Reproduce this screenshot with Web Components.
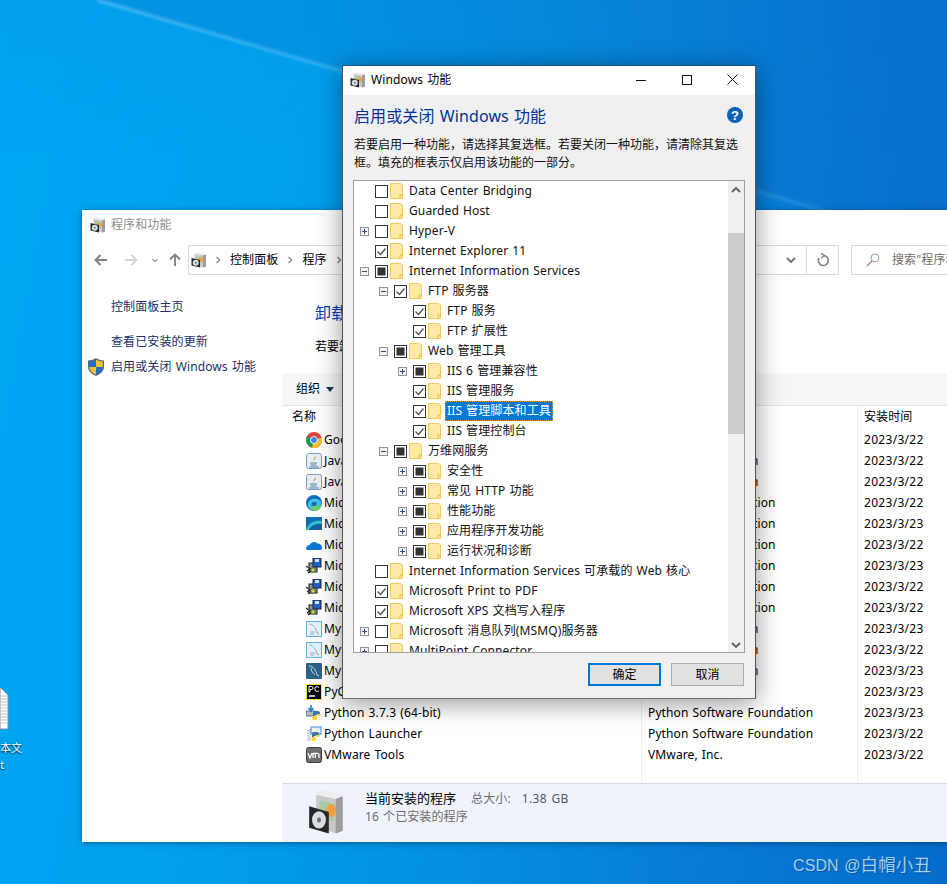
<!DOCTYPE html>
<html lang="zh-CN">
<head>
<meta charset="utf-8">
<title>Windows 功能</title>
<style>
	html, body { margin: 0; padding: 0; }
	body { font: 12px/18px "Noto Sans", "Noto Sans CJK SC", sans-serif; color: #000; letter-spacing: .12px; word-spacing: .8px; }
</style>
</head>
<body>
<win-desktop>
	<desktop-file></desktop-file>
	<programs-window>
		<program-row icon="chrome" pub="Google LLC" date="2023/3/22">Google Chrome</program-row>
		<program-row icon="java" pub="Oracle Corporation" date="2023/3/22">Java 8 Update 361 (64-bit)</program-row>
		<program-row icon="java" pub="Oracle Corporation" date="2023/3/22">Java SE Development Kit 8</program-row>
		<program-row icon="edge" pub="Microsoft Corporation" date="2023/3/22">Microsoft Edge</program-row>
		<program-row icon="flag" pub="Microsoft Corporation" date="2023/3/23">Microsoft Edge WebView2</program-row>
		<program-row icon="cloud" pub="Microsoft Corporation" date="2023/3/22">Microsoft OneDrive</program-row>
		<program-row icon="setup" pub="Microsoft Corporation" date="2023/3/23">Microsoft Visual C++ 2015</program-row>
		<program-row icon="setup" pub="Microsoft Corporation" date="2023/3/22">Microsoft Visual C++ 2019</program-row>
		<program-row icon="setup" pub="Microsoft Corporation" date="2023/3/22">Microsoft Visual C++ 2022</program-row>
		<program-row icon="mysql" pub="Oracle Corporation" date="2023/3/23">MySQL Connector</program-row>
		<program-row icon="mysql" pub="Oracle Corporation" date="2023/3/22">MySQL Installer</program-row>
		<program-row icon="mysqldark" pub="Oracle Corporation" date="2023/3/23">MySQL Server 8.0</program-row>
		<program-row icon="pycharm" pub="JetBrains s.r.o." date="2023/3/23">PyCharm Community Edition</program-row>
		<program-row icon="python" pub="Python Software Foundation" date="2023/3/23">Python 3.7.3 (64-bit)</program-row>
		<program-row icon="pylaunch" pub="Python Software Foundation" date="2023/3/22">Python Launcher</program-row>
		<program-row icon="vmware" pub="VMware, Inc." date="2023/3/22">VMware Tools</program-row>
	</programs-window>
	<features-dialog>
		<feature-row state="off">Data Center Bridging</feature-row>
		<feature-row state="off">Guarded Host</feature-row>
		<feature-row state="off" exp="plus">Hyper-V</feature-row>
		<feature-row state="on">Internet Explorer 11</feature-row>
		<feature-row state="part" exp="minus">Internet Information Services</feature-row>
		<feature-row level="1" state="on" exp="minus">FTP 服务器</feature-row>
		<feature-row level="2" state="on">FTP 服务</feature-row>
		<feature-row level="2" state="on">FTP 扩展性</feature-row>
		<feature-row level="1" state="part" exp="minus">Web 管理工具</feature-row>
		<feature-row level="2" state="part" exp="plus">IIS 6 管理兼容性</feature-row>
		<feature-row level="2" state="on">IIS 管理服务</feature-row>
		<feature-row level="2" state="on" selected>IIS 管理脚本和工具</feature-row>
		<feature-row level="2" state="on">IIS 管理控制台</feature-row>
		<feature-row level="1" state="part" exp="minus">万维网服务</feature-row>
		<feature-row level="2" state="part" exp="plus">安全性</feature-row>
		<feature-row level="2" state="part" exp="plus">常见 HTTP 功能</feature-row>
		<feature-row level="2" state="part" exp="plus">性能功能</feature-row>
		<feature-row level="2" state="part" exp="plus">应用程序开发功能</feature-row>
		<feature-row level="2" state="part" exp="plus">运行状况和诊断</feature-row>
		<feature-row state="off">Internet Information Services 可承载的 Web 核心</feature-row>
		<feature-row state="on">Microsoft Print to PDF</feature-row>
		<feature-row state="on">Microsoft XPS 文档写入程序</feature-row>
		<feature-row state="off" exp="plus">Microsoft 消息队列(MSMQ)服务器</feature-row>
		<feature-row state="off" exp="plus">MultiPoint Connector</feature-row>
	</features-dialog>
</win-desktop>

<script>
const BOX_ICON = `
	<svg viewBox="0 0 32 32" width="100%" height="100%" preserveAspectRatio="none">
		<path d="M7 4 L14 1 L30 5 V29 L24 31 L7 26 Z" fill="#c9c9c9"/>
		<path d="M7 4 L14 1 L30 5 L24 7 Z" fill="#efefef"/>
		<path d="M24 7 V31 L30 29 V5 Z" fill="#9d9d9d"/>
		<path d="M10 8 L22 10 V22 L10 20 Z" fill="#a9c9a0"/>
		<circle cx="20" cy="15" r="4.5" fill="#f0a040"/>
		<path d="M1 12 L18 16 V31 L1 27 Z" fill="#26282a"/>
		<circle cx="9.5" cy="21.5" r="6" fill="#d8dde0"/>
		<circle cx="9.5" cy="21.5" r="1.8" fill="#6f7478"/>
	</svg>`;

const APP_ICONS = {
	chrome: `<circle cx="8" cy="8" r="8" fill="#db4437"/>
		<path d="M8 8 L1 4.5 A8 8 0 0 0 6 15.8 Z" fill="#0f9d58"/>
		<path d="M8 8 L15.6 5.5 A8 8 0 0 1 6 15.8 Z" fill="#fbc02d"/>
		<circle cx="8" cy="8" r="3.8" fill="#fff"/><circle cx="8" cy="8" r="3" fill="#4285f4"/>`,
	java: `<rect x=".5" y=".5" width="15" height="15" rx="2" fill="#e6eef7" stroke="#7d9dbd"/>
		<path d="M9 2 C11 4 6 6 8 8.5 C7 6 11.500 5.500 9 2 Z" fill="#e76f00"/>
		<path d="M4 10 H11 M4.500 12 H10.500" stroke="#5382a1" stroke-width="1.200"/>
		<path d="M3 14 H13" stroke="#5382a1"/>`,
	edge: `<circle cx="8" cy="8" r="8" fill="#0c6fc0"/>
		<path d="M2 9 C3 3 12 2 15 7 C16 10 12 11 9.500 10.500 C12 9 10 6 7 7 C4 8 5 13 10 15.500 C5 16.500 1.500 13 2 9 Z" fill="#45c4e8"/>
		<path d="M9.500 10.500 C12 11 15 10.500 16 8 C16 12 13 16 9 16 C6 15 5 12 6 10 C6.500 12 8 11 9.500 10.500 Z" fill="#6fd06a"/>`,
	flag: `<rect y="1" width="16" height="13" fill="#0d6fb8"/>
		<path d="M0 14 C3 6 9 4 16 5 V8 C10 7 5 9 3 14 Z" fill="#35c1c9"/>
		<path d="M3 14 C5 10 10 8 16 9 V14 Z" fill="#1a5fa0"/>`,
	cloud: `<path d="M0 12 C0 9.500 2 8 3.500 8 C5 5 9 4 11 6.500 C14 6 16 8.500 16 11 C16 12 15.500 13 14 13 H2 C1 13 0 12.500 0 12 Z" fill="#0f78d4"/>`,
	setup: `<rect x="3" y="5" width="8" height="9" fill="#8a8f94" stroke="#222"/>
		<rect x="7" y="0" width="8" height="9" fill="#1d62c9" stroke="#223"/>
		<rect x="9" y="1" width="4" height="3" fill="#cfe3ff"/>
		<path d="M0 8 L3 10 M1 13 L5 10 M2 15 L6 12" stroke="#222" stroke-width="1.200"/>
		<circle cx="7" cy="12" r="2.200" fill="#d9d36a" stroke="#3b7a3b"/>`,
	mysql: `<rect x=".5" y=".5" width="15" height="15" fill="#e3f2fa" stroke="#5fb4de"/>
		<path d="M3 3 C7 3 10 7 11 12 L13 13 M4 11 H9 M4 13 H8" stroke="#8fb0c4" fill="none"/>`,
	mysqldark: `<rect width="16" height="16" rx="1" fill="#2d6287"/>
		<path d="M3 3 C7 3 10 7 11 12 L13 13 M5 5 C5 8 7 10 9 12" stroke="#c9d9e4" fill="none"/>`,
	pycharm: `<rect x=".5" y=".5" width="15" height="15" fill="#000" stroke="#f5e625"/>
		<path d="M3 2.500 H5.500 Q7 2.500 7 4 Q7 5.500 5.500 5.500 H4 V8 H3 Z M13 3.500 Q11 2 9.500 3 Q8 4.500 9.500 7 Q11 8 13 7" stroke="#fff" fill="none"/>
		<path d="M3 12 H9" stroke="#fff" stroke-width="1.500"/>`,
	python: `<rect x="0" y="6" width="9" height="5" fill="#a9b8c4" stroke="#5d7186"/>
		<path d="M5 0 V5 M2.500 3 L5 6 L7.500 3" stroke="#1b7fd4" stroke-width="1.500" fill="none"/>
		<path d="M8 6 H12 Q14 6 14 8 V10 H9 V12 H7 V8 Q7 6 8 6 Z" fill="#3c77a9"/>
		<path d="M15 9 H11 V13 Q11 16 8 15.500 Q6 15 6 13 V11 H12 Q15 11 15 9 Z" fill="#ffd43b"/>`,
	pylaunch: `<rect x="5" y="1" width="10" height="7" fill="#e8f1f9" stroke="#3d89d0"/>
		<path d="M2 4 L2 15 M4 3 L4 15" stroke="#7a8c9c" stroke-dasharray="1.500 1"/>
		<path d="M7 6 H11 Q13 6 13 8 V10 H8 V12 H6 V8 Q6 6 7 6 Z" fill="#3c77a9"/>
		<path d="M14 9 H10 V13 Q10 15.500 8 15.500 Q5.500 15 5.500 13 V11 H11 Q14 11 14 9 Z" fill="#ffd43b"/>`,
	vmware: `<rect x=".5" y=".5" width="15" height="15" rx="2" fill="#6e6e6e" stroke="#3e3e3e"/>
		<path d="M2 6 L4 11 L6 6 M7 11 V6 L7 7 Q8 5.500 9.300 6.500 V11 M9.300 7 Q10.500 5.500 12 6.500 Q13 7 13 8 V11" stroke="#fff" stroke-width="1.300" fill="none"/>`
};

class WinDesktop extends HTMLElement {
	constructor() {
		super();
		this.attachShadow({mode: 'open'}).innerHTML = `
			<style>
				:host {
					display: block;
					position: relative;
					width: 947px;
					height: 884px;
					overflow: hidden;
					background:
						linear-gradient(180deg, rgba(20, 90, 190, .07) 0, rgba(20, 90, 190, 0) 160px),
						linear-gradient(100deg, #00a6f3 0%, #00a1ef 28%, #048fe2 55%, #0779d6 80%, #056ccb 100%);
				}
				svg { position: absolute; inset: 0; }
				.mark {
					position: absolute;
					right: 16px;
					bottom: 8px;
					color: #a9cfe9;
					font: 16px/20px "Liberation Sans", "Noto Sans CJK SC", sans-serif;
					text-shadow: 1px 1px 1px rgba(0, 50, 110, .45);
					white-space: nowrap;
				}
				.mark span { font-size: 17.5px; }
			</style>
			<svg viewBox="0 0 947 884" width="947" height="884">
				<defs>
					<filter id="soft"><feGaussianBlur stdDeviation="1.4"/></filter>
					<linearGradient id="glow" x1="0" y1="0" x2="1" y2="0">
						<stop offset="0" stop-color="#fff" stop-opacity=".3"/>
						<stop offset="1" stop-color="#fff" stop-opacity=".1"/>
					</linearGradient>
				</defs>
				<polygon points="97,0 947,246 947,0" fill="#0a5fb5" opacity=".16"/>
				<line x1="97" y1="0" x2="947" y2="246" stroke="url(#glow)" stroke-width="3" filter="url(#soft)"/>
			</svg>
			<slot></slot>
			<div class="mark">CSDN @<span>白帽小丑</span></div>`;
	}
}

class DesktopFile extends HTMLElement {
	constructor() {
		super();
		this.attachShadow({mode: 'open'}).innerHTML = `
			<style>
				:host {
					position: absolute;
					left: 0;
					top: 688px;
					width: 26px;
					color: #fff;
					font: 11px/17px "Noto Sans CJK SC", sans-serif;
					text-shadow: 0 1px 2px #000;
				}
				svg { display: block; margin-bottom: 9px; }
			</style>
			<svg width="9" height="42" viewBox="0 0 9 42">
				<path d="M0 0 H1 L8 7 V41 H0 Z" fill="#fff" stroke="#8f8f8f"/>
				<path d="M0 8 H7 M0 11 H7 M0 14 H7 M0 17 H7 M0 20 H7 M0 23 H7 M0 26 H7 M0 29 H7 M0 32 H7 M0 35 H7" stroke="#c2c2c2"/>
			</svg>
			<div>本文</div><div>t</div>`;
	}
}

class BoxIcon extends HTMLElement {
	constructor() {
		super();
		this.attachShadow({mode: 'open'}).innerHTML = `
			<style>:host { display: block; width: var(--size, 16px); height: var(--tall, var(--size, 16px)); flex: none; }</style>
			${BOX_ICON}`;
	}
}

class ProgramRow extends HTMLElement {
	constructor() {
		super();
		this.attachShadow({mode: 'open'}).innerHTML = `
			<style>
				:host {
					display: grid;
					grid-template-columns: 359px 216px 1fr;
					height: 21px;
					line-height: 21px;
					white-space: nowrap;
				}
				.name { display: flex; align-items: center; gap: 2px; padding-left: 24px; overflow: hidden; }
				svg { flex: none; }
				.pub { padding-left: 7px; }
				.date { padding-left: 7px; letter-spacing: .3px; }
			</style>
			<div class="name">
				<svg width="16" height="16" viewBox="0 0 16 16">${APP_ICONS[this.getAttribute('icon')]}</svg>
				<slot></slot>
			</div>
			<div class="pub">${this.getAttribute('pub')}</div>
			<div class="date">${this.getAttribute('date')}</div>`;
	}
}

class ProgramsWindow extends HTMLElement {
	constructor() {
		super();
		this.attachShadow({mode: 'open'}).innerHTML = `
			<style>
				:host {
					position: absolute;
					left: 82px;
					top: 210px;
					width: 880px;
					height: 632px;
					background: #fff;
					display: flex;
					flex-direction: column;
					box-shadow: 0 1px 6px rgba(0, 30, 70, .5);
				}
				.title {
					height: 30px;
					display: flex;
					align-items: center;
					gap: 5px;
					padding-left: 8px;
					color: #8e8e8e;
					flex: none;
					--size: 16px;
				}
				.bar {
					height: 30px;
					margin: 5px 0 5px;
					display: flex;
					align-items: center;
					flex: none;
				}
				.nav { width: 106px; display: flex; align-items: center; flex: none; padding-left: 11px; box-sizing: border-box; gap: 0; }
				.nav svg { display: block; flex: none; }
				.addr {
					width: 651px;
					height: 30px;
					box-sizing: border-box;
					border: 1px solid #d9d9d9;
					display: flex;
					align-items: center;
					overflow: hidden;
					flex: none;
					--size: 16px;
				}
				.addr .crumbs { flex: 1; display: flex; align-items: center; padding-left: 2px; }
				.addr .crumbs span { margin: 0 7px; }
				.addr .crumbs svg { flex: none; }
				.drop { width: 31px; height: 28px; display: flex; align-items: center; justify-content: center; border-right: 1px solid #d9d9d9; }
				.refresh { width: 31px; height: 28px; display: flex; align-items: center; justify-content: center; border-left: 0; }
				.search {
					margin-left: 12px;
					flex: 1;
					height: 30px;
					box-sizing: border-box;
					border: 1px solid #d9d9d9;
					display: flex;
					align-items: center;
					gap: 12px;
					padding-left: 14px;
					color: #6d6d6d;
					white-space: nowrap;
				}
				.body { flex: 1; display: flex; min-height: 0; }
				.side {
					width: 200px;
					flex: none;
					padding-top: 18px;
					box-sizing: border-box;
					color: #1a2f6b;
				}
				.side div { height: 18px; line-height: 18px; padding-left: 29px; white-space: nowrap; }
				.side .gap { margin-top: 17px; }
				.side .feat { margin-top: 7px; padding-left: 6px; display: flex; gap: 7px; align-items: center; }
				.main { flex: 1; display: flex; flex-direction: column; min-width: 0; }
				.intro { height: 93px; flex: none; padding-left: 33px; box-sizing: border-box; }
				.intro h2 { margin: 0; padding-top: 22px; height: 36px; box-sizing: content-box; font-weight: 400; font-size: 16px; line-height: 22px; color: #0a3cb0; }
				.intro p { margin: 0; line-height: 18px; white-space: nowrap; }
				.tools {
					height: 32px;
					flex: none;
					background: #f5f6f7;
					display: flex;
					align-items: center;
					gap: 6px;
					padding-left: 14px;
				}
				.tools i { width: 0; height: 0; border: 4px solid transparent; border-top: 5px solid #1f3350; border-bottom: 0; }
				.list { flex: 1; position: relative; min-height: 0; border-top: 1px solid #e5e5e5; border-bottom: 1px solid #d6dbe9; }
				.sep { position: absolute; top: 0; bottom: 0; width: 1px; background: #e9eff6; }
				.head { height: 23px; display: grid; grid-template-columns: 575px 1fr; line-height: 21px; }
				.head span { padding-left: 10px; }
				.head span + span { padding-left: 7px; }
				.foot {
					height: 58px;
					flex: none;
					background: #f0f3fb;
					display: flex;
					gap: 20px;
					padding: 5px 0 0 26px;
					box-sizing: border-box;
					--size: 37px;
					--tall: 46px;
				}
				.foot .l1 { line-height: 18px; white-space: nowrap; }
				.foot .l1 strong { font-weight: 400; font-size: 13px; letter-spacing: 0; }
				.foot em { font-style: normal; color: #6d6d6d; margin-left: 15px; }
				.foot b { font-weight: 400; color: #4d5a6d; margin-left: 11px; letter-spacing: .4px; }
				.foot .l2 { line-height: 18px; color: #6d6d6d; }
			</style>
			<div class="title"><box-icon></box-icon><span>程序和功能</span></div>
			<div class="bar">
				<div class="nav">
					<svg width="16" height="16" viewBox="0 0 16 16"><path d="M14 8 H3 M7.500 3 L2.500 8 L7.500 13" fill="none" stroke="#808080" stroke-width="1.800"/></svg>
					<svg style="margin-left:14px" width="16" height="16" viewBox="0 0 16 16"><path d="M2 8 H13 M8.500 3 L13.500 8 L8.500 13" fill="none" stroke="#d3d3d3" stroke-width="1.800"/></svg>
					<svg style="margin-left:10px" width="12" height="12" viewBox="0 0 12 12"><path d="M3.500 5 L6 7.500 L8.500 5" fill="none" stroke="#a0a0a0" stroke-width="1.400"/></svg>
					<svg style="margin-left:6px" width="16" height="16" viewBox="0 0 16 16"><path d="M8 14 V3 M3 7.500 L8 2.500 L13 7.500" fill="none" stroke="#808080" stroke-width="1.800"/></svg>
				</div>
				<div class="addr">
					<div class="crumbs">
						<box-icon></box-icon>
						<svg style="margin-left:6px" width="10" height="10" viewBox="0 0 10 10"><path d="M3.500 2 L6.500 5 L3.500 8" fill="none" stroke="#8a8a8a" stroke-width="1.400"/></svg>
						<span>控制面板</span>
						<svg width="10" height="10" viewBox="0 0 10 10"><path d="M3.500 2 L6.500 5 L3.500 8" fill="none" stroke="#8a8a8a" stroke-width="1.400"/></svg>
						<span>程序</span>
						<svg width="10" height="10" viewBox="0 0 10 10"><path d="M3.500 2 L6.500 5 L3.500 8" fill="none" stroke="#8a8a8a" stroke-width="1.400"/></svg>
					</div>
					<div class="drop"><svg width="12" height="12" viewBox="0 0 12 12"><path d="M2 4 L6 8 L10 4" fill="none" stroke="#707070" stroke-width="1.800"/></svg></div>
					<div class="refresh"><svg width="14" height="14" viewBox="0 0 14 14"><path d="M7.500 2.500 A5 5 0 1 1 3 5" fill="none" stroke="#808080" stroke-width="1.600"/><path d="M5 0 L8.500 2.500 L5 5" fill="none" stroke="#808080" stroke-width="1.400"/></svg></div>
				</div>
				<div class="search">
					<svg width="14" height="14" viewBox="0 0 14 14"><circle cx="9" cy="5" r="4" fill="none" stroke="#9a9a9a"/><path d="M6 8 L1 13" stroke="#c06a9a" stroke-width="1.200"/></svg>
					<span>搜索"程序和功能"</span>
				</div>
			</div>
			<div class="body">
				<div class="side">
					<div>控制面板主页</div>
					<div class="gap">查看已安装的更新</div>
					<div class="feat">
						<svg width="16" height="18" viewBox="0 0 16 18" style="flex:none">
							<path d="M8 0 C10 1.500 13 2.500 16 2.500 V9 C16 13 12 16.500 8 18 C4 16.500 0 13 0 9 V2.500 C3 2.500 6 1.500 8 0 Z" fill="#5a6a7a"/>
							<path d="M8 1.500 V9 H1.200 V3.500 C4 3.500 6 2.800 8 1.500 Z" fill="#1f6fc4"/>
							<path d="M8 1.500 C10 2.800 12 3.500 14.800 3.500 V9 H8 Z" fill="#f5c12e"/>
							<path d="M1.200 9 H8 V16.500 C4.500 15 1.500 12.500 1.200 9 Z" fill="#f5c12e"/>
							<path d="M8 9 H14.800 C14.500 12.500 11.500 15 8 16.500 Z" fill="#1f6fc4"/>
						</svg>
						<span>启用或关闭 Windows 功能</span>
					</div>
				</div>
				<div class="main">
					<div class="intro">
						<h2>卸载或更改程序</h2>
						<p>若要卸载程序，请从列表中将其选中，然后单击"卸载"、"更改"或"修复"。</p>
					</div>
					<div class="tools"><span>组织</span><i></i></div>
					<div class="list">
						<div class="sep" style="left:359px"></div>
						<div class="sep" style="left:575px"></div>
						<div class="head"><span>名称</span><span>安装时间</span></div>
						<slot></slot>
					</div>
					<div class="foot">
						<box-icon></box-icon>
						<div>
							<div class="l1"><strong>当前安装的程序</strong><em>总大小:</em><b>1.38 GB</b></div>
							<div class="l2">16 个已安装的程序</div>
						</div>
					</div>
				</div>
			</div>`;
	}
}

class FeatureRow extends HTMLElement {
	constructor() {
		super();
		const level = Number(this.getAttribute('level') || 0);
		const state = this.getAttribute('state');
		const exp = this.getAttribute('exp');
		let mark = '';
		if (state === 'on') mark = '<path d="M2.500 6.500 L5.500 9.500 L10.500 3.500" fill="none" stroke="#505050" stroke-width="1.300"/>';
		if (state === 'part') mark = '<rect x="2.500" y="2.500" width="8" height="8" fill="#333"/>';
		let sign = '';
		if (exp) {
			sign = `<svg class="exp" width="9" height="9" viewBox="0 0 9 9">
				<rect x=".5" y=".5" width="8" height="8" fill="#f4f4f4" stroke="#929292"/>
				<path d="M2 4.500 H7${exp === 'plus' ? ' M4.500 2 V7' : ''}" stroke="#2f4a7f"/>
			</svg>`;
		}
		this.attachShadow({mode: 'open'}).innerHTML = `
			<style>
				:host {
					display: flex;
					align-items: center;
					height: 20px;
					flex: none;
					padding-left: ${6 + level * 19}px;
					white-space: nowrap;
				}
				.exp-slot { width: 9px; height: 9px; margin-right: 6px; flex: none; }
				.exp { display: block; }
				.check { display: block; flex: none; }
				.folder { display: block; flex: none; margin-left: 2px; }
				.label { margin-left: 4px; padding: 0 2px; height: 20px; line-height: 19px; box-sizing: border-box; color: #111; }
				:host([selected]) .label {
					background: #0078d7;
					color: #fff;
					outline: 1px dotted #f0a030;
					outline-offset: -1px;
				}
			</style>
			<div class="exp-slot">${sign}</div>
			<svg class="check" width="13" height="13" viewBox="0 0 13 13">
				<rect x=".5" y=".5" width="12" height="12" fill="#fff" stroke="#333"/>
				${mark}
			</svg>
			<svg class="folder" width="13" height="16" viewBox="0 0 13 16">
				<path d="M.5 .5 H9.500 L9.500 .5 Q12.500 .5 12.500 3 V15.500 H.5 Z" fill="#ffe9a8" stroke="#f2cb5c"/>
				<path d="M10 15 V12 H12" fill="none" stroke="#e9b93a"/>
			</svg>
			<div class="label"><slot></slot></div>`;
	}
}

class FeaturesDialog extends HTMLElement {
	constructor() {
		super();
		this.attachShadow({mode: 'open'}).innerHTML = `
			<style>
				:host {
					position: absolute;
					left: 342px;
					top: 65px;
					width: 414px;
					height: 634px;
					box-sizing: border-box;
					border: 1px solid #34495c;
					border-color: #1f4e79 #545454 #707070 #545454;
					background: #f0f0f0;
					display: flex;
					flex-direction: column;
					box-shadow: 0 4px 24px rgba(0, 0, 0, .42);
				}
				.title {
					height: 29px;
					flex: none;
					box-sizing: border-box;
					background: #fff;
					display: flex;
					align-items: center;
					padding: 0 0 2px 7px;
					--size: 16px;
				}
				.title .name { flex: 1; margin-left: 5px; }
				.ctl { width: 45.5px; height: 27px; display: flex; align-items: center; justify-content: center; flex: none; }
				.head { display: flex; align-items: center; justify-content: space-between; padding: 10px 12px 0 11px; height: 22px; flex: none; }
				h1 { margin: 0; font-weight: 400; font-size: 16px; line-height: 22px; color: #003399; }
				.help { display: block; margin-bottom: 2px; }
				p { margin: 9px 11px 0 11px; line-height: 18px; height: 36px; flex: none; color: #111; width: 390px; letter-spacing: 0; }
				.pane {
					margin: 8px 10px 0 10px;
					height: 473px;
					flex: none;
					box-sizing: border-box;
					border: 1px solid #a0a0a0;
					background: #fff;
					display: flex;
					overflow: hidden;
				}
				.tree { flex: 1; display: flex; flex-direction: column; overflow: hidden; }
				.scroll { width: 16px; flex: none; background: #f0f0f0; display: flex; flex-direction: column; }
				.scroll svg { display: block; flex: none; }
				.thumb { height: 201px; background: #cdcdcd; margin-top: 36px; flex: none; }
				.down { margin-top: auto; }
				.btns { display: flex; justify-content: flex-end; gap: 10px; margin: 10px 11px 0 0; flex: none; }
				.btn {
					width: 73px;
					height: 23px;
					box-sizing: border-box;
					border: 1px solid #adadad;
					background: #e1e1e1;
					text-align: center;
					line-height: 21px;
				}
				.btn.main { border: 2px solid #0078d7; line-height: 19px; }
			</style>
			<div class="title">
				<box-icon></box-icon>
				<span class="name">Windows 功能</span>
				<div class="ctl"><svg width="10" height="10" viewBox="0 0 10 10"><path d="M0 5.500 H10" stroke="#111"/></svg></div>
				<div class="ctl"><svg width="10" height="10" viewBox="0 0 10 10"><rect x=".5" y=".5" width="9" height="9" fill="none" stroke="#111"/></svg></div>
				<div class="ctl"><svg width="11" height="11" viewBox="0 0 11 11"><path d="M.5 .5 L10.500 10.500 M10.500 .5 L.5 10.500" stroke="#111"/></svg></div>
			</div>
			<div class="head">
				<h1>启用或关闭 Windows 功能</h1>
				<svg class="help" width="16" height="16" viewBox="0 0 16 16">
					<circle cx="8" cy="8" r="8" fill="#0a62b5"/>
					<text x="8" y="12.500" text-anchor="middle" fill="#fff" font-family="Liberation Sans" font-weight="700" font-size="13">?</text>
				</svg>
			</div>
			<p>若要启用一种功能，请选择其复选框。若要关闭一种功能，请清除其复选框。填充的框表示仅启用该功能的一部分。</p>
			<div class="pane">
				<div class="tree"><slot></slot></div>
				<div class="scroll">
					<svg width="16" height="16" viewBox="0 0 16 16"><path d="M4 11 L8 7 L12 11" fill="none" stroke="#606060" stroke-width="1.800"/></svg>
					<div class="thumb"></div>
					<svg class="down" width="16" height="16" viewBox="0 0 16 16"><path d="M4 7 L8 11 L12 7" fill="none" stroke="#606060" stroke-width="1.800"/></svg>
				</div>
			</div>
			<div class="btns">
				<div class="btn main">确定</div>
				<div class="btn">取消</div>
			</div>`;
	}
}

customElements.define('box-icon', BoxIcon);
customElements.define('win-desktop', WinDesktop);
customElements.define('desktop-file', DesktopFile);
customElements.define('program-row', ProgramRow);
customElements.define('programs-window', ProgramsWindow);
customElements.define('feature-row', FeatureRow);
customElements.define('features-dialog', FeaturesDialog);
</script>
</body>
</html>
